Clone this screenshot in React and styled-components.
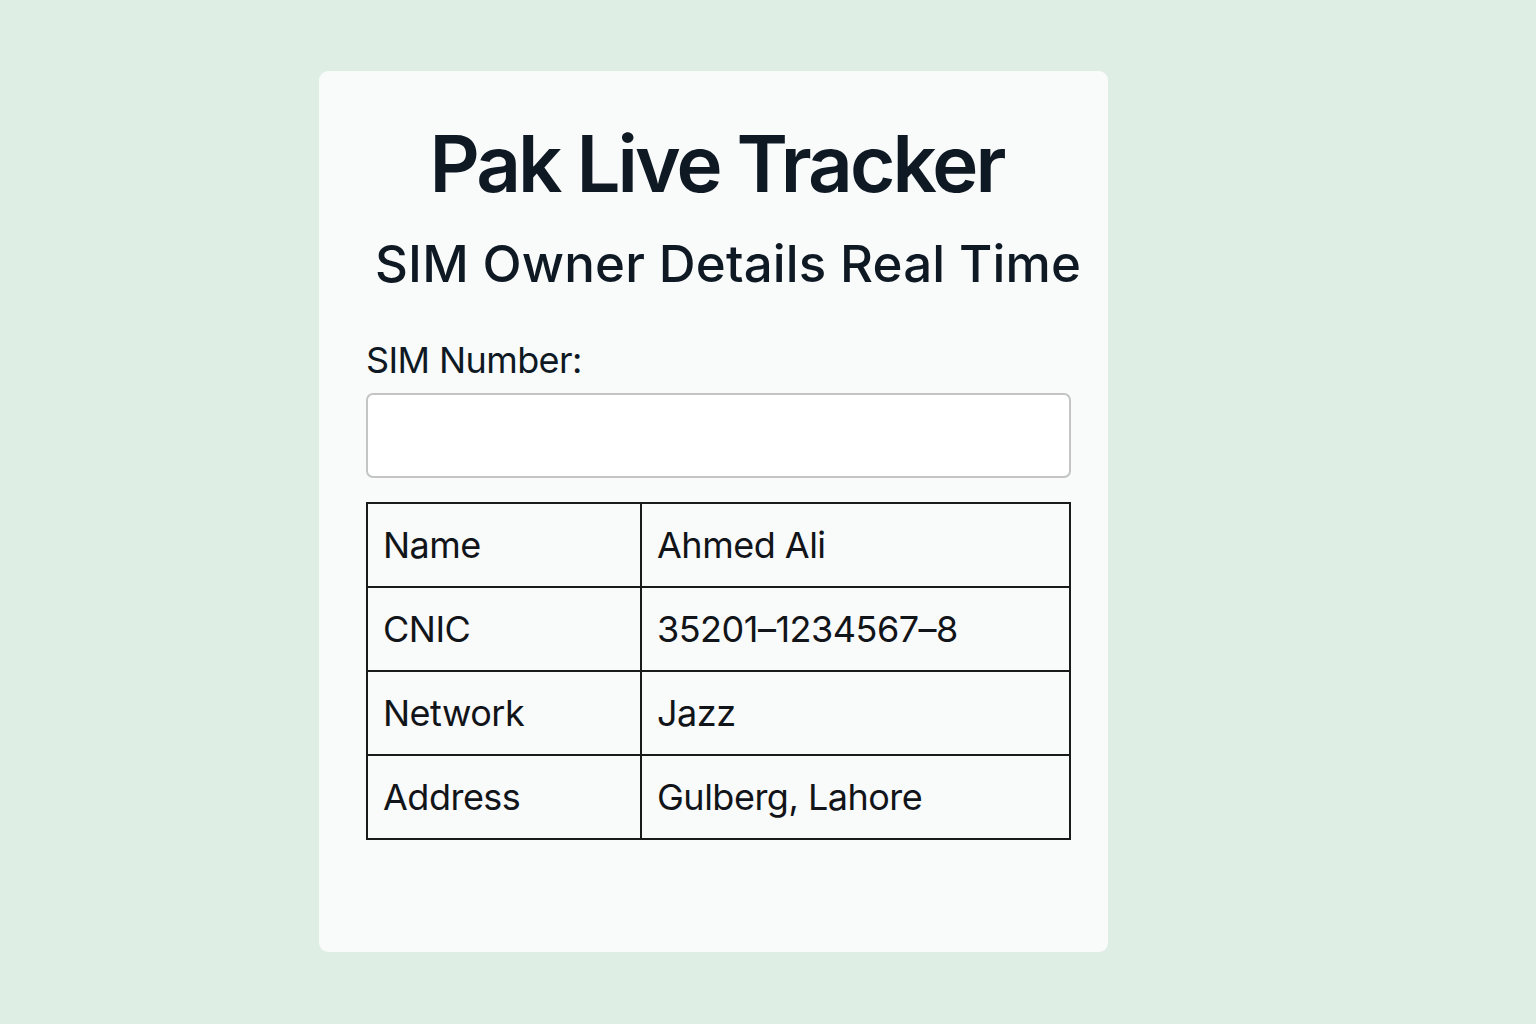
import React from "react";
import styled, { createGlobalStyle } from "styled-components";

const GlobalStyle = createGlobalStyle`
    body {
        margin: 0;
        background: #dfeee4;
        font-family: Inter, "Liberation Sans", sans-serif;
    }
`
const Page = styled.div`
    min-height: 100vh;
    padding: 71px 0 0 319px;
    box-sizing: border-box;
`
const Card = styled.section`
    width: 789px;
    height: 881px;
    box-sizing: border-box;
    background: #f9fafa;
    border-radius: 9px;
    padding: 54px 37px 0 47px;
    display: flex;
    flex-direction: column;
    color: #0e1924;
`
const Title = styled.h1`
    margin: 0;
    padding-right: 4px;
    font-size: 78px;
    line-height: 1;
    font-weight: 600;
    text-align: center;
    letter-spacing: -2.9px;
`
const Subtitle = styled.h2`
    margin: 35px 0 0 0;
    padding-left: 9px;
    font-size: 51px;
    line-height: 1;
    font-weight: 500;
    white-space: nowrap;
    letter-spacing: 0.15px;
`
const Label = styled.label`
    margin-top: 53px;
    font-size: 36px;
    line-height: 1;
    font-weight: 400;
    letter-spacing: -0.6px;
`
const Input = styled.input`
    margin-top: 15px;
    height: 85px;
    box-sizing: border-box;
    border: 2px solid #c4c4c4;
    border-radius: 7px;
    background: #ffffff;
    font-size: 32px;
    padding: 0 18px;
`
const Table = styled.table`
    margin-top: 24px;
    width: 100%;
    border-collapse: collapse;
`
const Cell = styled.td`
    height: 84px;
    box-sizing: border-box;
    border: 2px solid #1a1a1a;
    padding: 0 15px;
    font-size: 36px;
    font-weight: 400;
    color: #111418;
    letter-spacing: -0.5px;
    width: ${props => props.$key ? "274px" : "auto"};
`

const rows = [
    ["Name", "Ahmed Ali"],
    ["CNIC", "35201–1234567–8"],
    ["Network", "Jazz"],
    ["Address", "Gulberg, Lahore"],
]

const App = () => {
    return(
        <Page>
            <GlobalStyle />
            <Card>
                <Title>Pak Live Tracker</Title>
                <Subtitle>SIM Owner Details Real Time</Subtitle>
                <Label htmlFor="sim">SIM Number:</Label>
                <Input id="sim" type="text" />
                <Table>
                    <tbody>
                        {rows.map(([k, v]) => (
                            <tr key={k}>
                                <Cell $key>{k}</Cell>
                                <Cell>{v}</Cell>
                            </tr>
                        ))}
                    </tbody>
                </Table>
            </Card>
        </Page>
    )
}

export default App;
